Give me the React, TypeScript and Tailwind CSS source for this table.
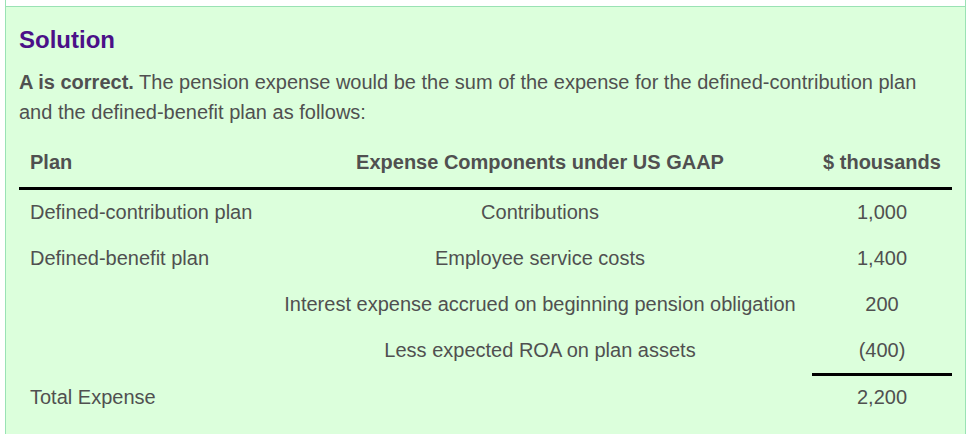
import type { FC } from "react";

type Row = {
  plan: string;
  component: string;
  amount: string;
};

const rows: Row[] = [
  { plan: "Defined-contribution plan", component: "Contributions", amount: "1,000" },
  { plan: "Defined-benefit plan", component: "Employee service costs", amount: "1,400" },
  { plan: "", component: "Interest expense accrued on beginning pension obligation", amount: "200" },
  { plan: "", component: "Less expected ROA on plan assets", amount: "(400)" },
];

const App: FC = () => {
  return (
    <div className="h-[434px] w-full overflow-hidden bg-white pl-[5px] font-['Liberation_Sans',Arial,sans-serif] text-[#505050]">
      <div className="w-[961px] h-full border-x border-[#9ae2b4]">
        {/* bottom of the previous (white) panel */}
        <div className="h-[6px] bg-white" />

        <div className="h-full border-t border-[#9ae2b4] bg-[#dcffdc] pl-[13px] pr-[12px] pt-[19px]">
          <h2 className="text-[24px] leading-[28px] font-bold text-[#4b1088]">Solution</h2>

          <p className="mt-[13px] text-[20px] leading-[30px]">
            <span className="font-bold">A is correct.</span> The pension expense would be the sum of the
            expense for the defined-contribution plan
            <br />
            and the defined-benefit plan as follows:
          </p>

          {/* Expense table */}
          <div className="mt-[10px] w-[933px] text-[20px] leading-[24px]">
            <div className="grid grid-cols-[249px_544px_140px] border-b-[3px] border-black pt-[13px] pb-[13px] font-bold">
              <div className="pl-[11px]">Plan</div>
              <div className="text-center">Expense Components under US GAAP</div>
              <div className="text-center">$ thousands</div>
            </div>

            {rows.map((row, i) => (
              <div key={i} className="grid grid-cols-[249px_544px_140px]">
                <div className="pl-[11px] pt-[10px] pb-[12px]">{row.plan}</div>
                <div className="text-center pt-[10px] pb-[12px]">{row.component}</div>
                <div
                  className={
                    i === rows.length - 1
                      ? "text-center pt-[10px] pb-[11px] border-b-[3px] border-black"
                      : "text-center pt-[10px] pb-[12px]"
                  }
                >
                  {row.amount}
                </div>
              </div>
            ))}

            <div className="grid grid-cols-[249px_544px_140px] pt-[9px]">
              <div className="pl-[11px]">Total Expense</div>
              <div />
              <div className="text-center">2,200</div>
            </div>
          </div>
        </div>
      </div>
    </div>
  );
};

export default App;
